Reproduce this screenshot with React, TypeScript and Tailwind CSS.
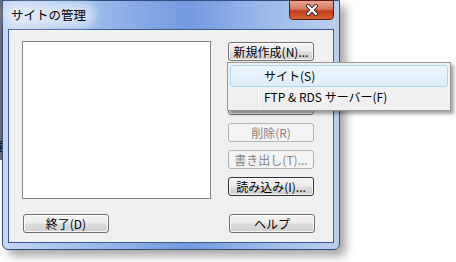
import React from "react";

const font = { fontFamily: '"Noto Sans CJK JP", "Noto Sans", sans-serif' };

function Btn({ label, disabled, focused }: { label: string; disabled?: boolean; focused?: boolean }) {
  if (disabled) {
    return (
      <div className="h-[19px] w-[86px] rounded-[3px] border border-[#adb2b5] bg-[#f4f4f4] flex items-center justify-center text-[12px] leading-none text-[#838383]">
        {label}
      </div>
    );
  }
  return (
    <div
      className={
        "h-[19px] w-[86px] rounded-[3px] border flex items-center justify-center text-[12px] leading-none text-black bg-[linear-gradient(#f3f3f3_0%,#ebebeb_48%,#dddddd_52%,#cfcfcf_100%)] shadow-[inset_0_0_0_1px_rgba(255,255,255,0.8)] " +
        (focused ? "border-[#333333]" : "border-[#707070]")
      }
    >
      {label}
    </div>
  );
}

export default function App() {
  return (
    <div className="relative w-[456px] h-[262px] overflow-hidden bg-white" style={font}>
      {/* background window edge */}
      <div className="absolute left-0 top-0 w-[3px] h-[160px] bg-[#6d6d6d]" />
      <div className="absolute left-[-8px] top-[140px] text-[12px] leading-none text-black">理</div>

      {/* dialog window */}
      <div className="absolute left-[2px] top-0 w-[338px] h-[250px] rounded-b-[6px] border border-[#2f4f80] bg-[linear-gradient(90deg,#c4d7f2_0%,#97b6e8_30%,#7499df_55%,#a0bbea_80%,#bdd0f0_100%)] shadow-[6px_6px_10px_rgba(0,0,0,0.35)] flex flex-col">
        {/* title bar */}
        <div className="relative h-[28px] flex items-center pl-[8px]">
          <div className="absolute left-[2px] top-[2px] w-[90px] h-[24px] rounded-full bg-[rgba(255,255,255,0.55)] blur-[5px]" />
          <span className="relative text-[12.5px] leading-none text-black pt-[1px]">サイトの管理</span>
          <div className="absolute right-[5px] top-[-1px] w-[45px] h-[20px] rounded-b-[4px] border border-[#5a1c14] bg-[linear-gradient(#e8a592_0%,#d77a62_45%,#c23a1d_55%,#d4652f_100%)] flex items-center justify-center">
            <svg width="14" height="12" viewBox="0 0 14 12">
              <path d="M3 2 L11 10 M11 2 L3 10" stroke="#3a2a2a" strokeWidth="4" strokeLinecap="round" />
              <path d="M3 2 L11 10 M11 2 L3 10" stroke="#ffffff" strokeWidth="2.2" strokeLinecap="round" />
            </svg>
          </div>
        </div>
        {/* client area */}
        <div className="mx-[5px] mb-[6px] flex-1 border border-[#3a5c92] bg-[#f0f0f0] pt-[11px] pl-[13px] flex flex-col">
          <div className="flex gap-[17px]">
            <div className="w-[189px] h-[158px] border border-[#828790] bg-white" />
            <div className="flex flex-col gap-[8px] pt-[1px]">
              <Btn label="新規作成(N)..." />
              <Btn label="" />
              <Btn label="" />
              <Btn label="削除(R)" disabled />
              <Btn label="書き出し(T)..." disabled />
              <Btn label="読み込み(I)..." focused />
            </div>
          </div>
          <div className="flex gap-[120px] mt-[15px] pl-[1px]">
            <Btn label="終了(D)" />
            <Btn label="ヘルプ" />
          </div>
        </div>
      </div>

      {/* dropdown menu */}
      <div className="absolute left-[227px] top-[62px] w-[224px] h-[49px] border border-[#979797] bg-[#f0f0f0] shadow-[3px_3px_3px_rgba(0,0,0,0.35)] p-[2px] flex flex-col text-[12px] leading-none text-black">
        <div className="absolute left-[29px] top-[2px] bottom-[2px] w-[2px] border-l border-[#e2e3e3] bg-white" />
        <div className="relative h-[22px] rounded-[3px] border border-[#a8d8eb] bg-[linear-gradient(#edf6fc,#dcedf9)] flex items-center pl-[33px]">
          サイト(S)
        </div>
        <div className="relative h-[22px] flex items-center pl-[34px]">FTP &amp; RDS サーバー(F)</div>
      </div>
    </div>
  );
}
